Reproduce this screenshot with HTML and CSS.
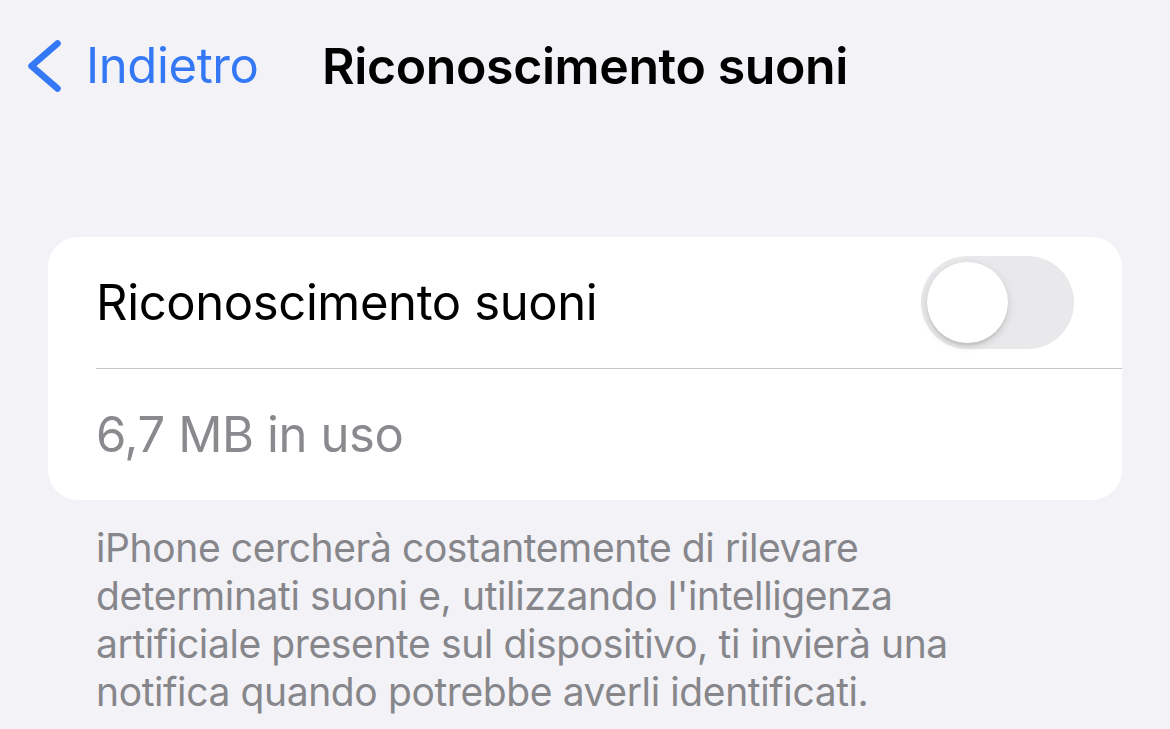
FILE: index.html
```html
<!DOCTYPE html>
<html lang="it">
<head>
  <meta charset="UTF-8" />
  <meta name="viewport" content="width=device-width, initial-scale=1.0"/>
  <title>Riconoscimento suoni</title>
  <link rel="stylesheet" href="styles.css">
</head>
<body>

  <!-- Navigation bar -->
  <header class="nav">
    <a class="back" href="#">
      <svg class="chevron" width="40" height="64" viewBox="0 0 40 64">
        <path d="M35.5 9.5 L9.5 32 L35.5 54.5" />
      </svg>
      <span>Indietro</span>
    </a>
    <h1 class="nav-title">Riconoscimento suoni</h1>
    <div></div>
  </header>

  <!-- Settings group -->
  <section class="group">
    <div class="row">
      <span class="label">Riconoscimento suoni</span>
      <label class="switch">
        <input type="checkbox" />
        <span class="knob"></span>
      </label>
    </div>
    <div class="divider"></div>
    <div class="row">
      <span class="label muted">6,7 MB in uso</span>
    </div>
  </section>

  <p class="footer">
    iPhone cercherà costantemente di rilevare<br>
    determinati suoni e, utilizzando l'intelligenza<br>
    artificiale presente sul dispositivo, ti invierà una<br>
    notifica quando potrebbe averli identificati.
  </p>

</body>
</html>
```

FILE: styles.css
```css
* {
  box-sizing: border-box;
}

body {
  margin: 0;
  background: #f2f2f7;
  font-family: 'Inter', 'Noto Sans', sans-serif;
  color: #000;
  letter-spacing: -0.024em;
}

/* Navigation bar */
.nav {
  height: 131px;
  display: grid;
  grid-template-columns: 1fr auto 1fr;
  align-items: center;
  padding: 0 22px;
}

.back {
  display: flex;
  align-items: center;
  gap: 24px;
  color: #3478f6;
  text-decoration: none;
  font-size: 49px;
}

.chevron path {
  fill: none;
  stroke: #3478f6;
  stroke-width: 6.5;
  stroke-linecap: round;
  stroke-linejoin: round;
}

.nav-title {
  margin: 0;
  font-size: 50px;
  font-weight: 600;
}

/* Grouped list */
.group {
  margin: 106px 48px 0;
  background: #fff;
  border-radius: 30px;
  overflow: hidden;
}

.row {
  height: 131px;
  padding: 0 48px;
  display: flex;
  align-items: center;
  justify-content: space-between;
}

.label {
  font-size: 49px;
}

.muted {
  color: #8a8a8e;
}

.divider {
  height: 1px;
  margin-left: 48px;
  background: #c6c6c8;
}

/* Toggle switch */
.switch {
  position: relative;
  width: 153px;
  height: 93px;
  border-radius: 47px;
  background: #e9e9eb;
  flex-shrink: 0;
}

.switch input {
  display: none;
}

.knob {
  position: absolute;
  top: 6px;
  left: 6px;
  width: 81px;
  height: 81px;
  border-radius: 50%;
  background: #fff;
  box-shadow: 0 3px 8px rgba(0, 0, 0, 0.15), 0 3px 1px rgba(0, 0, 0, 0.06);
}

/* Footer note */
.footer {
  margin: 24px 48px 0 96px;
  font-size: 39px;
  line-height: 48px;
  color: #86868b;
  letter-spacing: -0.01em;
}
```
